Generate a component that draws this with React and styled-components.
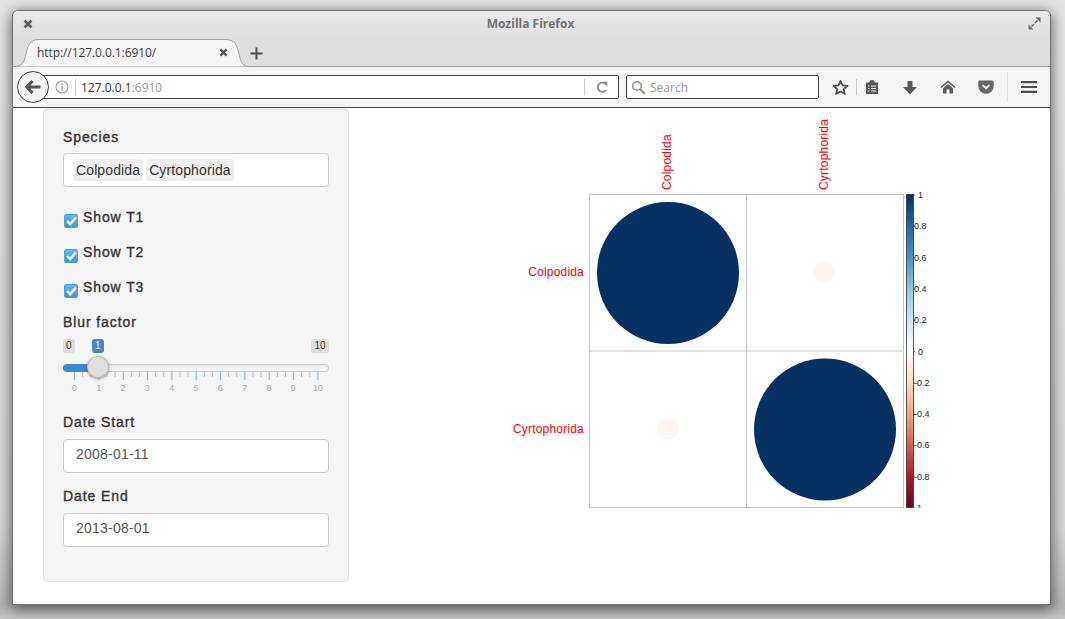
import styled, { createGlobalStyle } from "styled-components"

const Global = createGlobalStyle`
    html, body { margin: 0; padding: 0; }
    body {
        width: 1065px;
        height: 619px;
        overflow: hidden;
        background: linear-gradient(#e4e4e4, #d6d6d6 85%, #b4b4b4 98%, #c8c8c8);
        font-family: "Liberation Sans", Arial, sans-serif;
    }
`

const Desktop = styled.div`
    padding: 11px 15px 15px 13px;
    height: 619px;
    box-sizing: border-box;
`

const Win = styled.div`
    height: 593px;
    background: #fff;
    border-radius: 5px 5px 0 0;
    box-shadow: 0 0 0 1px #6f6f6f, 0 3px 14px 2px rgba(0,0,0,.55);
    display: flex;
    flex-direction: column;
    overflow: hidden;
`

const TitleBar = styled.div`
    height: 28px;
    flex: none;
    box-sizing: border-box;
    background: linear-gradient(#e8e8e8, #e0e0e0);
    display: flex;
    align-items: center;
    justify-content: space-between;
    padding: 0 9px 3px 10px;
    color: #6d6d6d;
`

const Title = styled.div`
    font-family: "Open Sans", sans-serif;
    font-size: 12px;
    font-weight: 700;
    color: #737373;
`

const TabStrip = styled.div`
    height: 28px;
    flex: none;
    box-sizing: border-box;
    background: #dedede;
    border-bottom: 1px solid #9b9b9b;
    display: flex;
    align-items: flex-end;
    padding-left: 12px;
`

const Tab = styled.div`
    width: 216px;
    height: 28px;
    margin-bottom: -1px;
    box-sizing: border-box;
    position: relative;
    display: flex;
    align-items: center;
    justify-content: space-between;
    padding: 0 13px 2px 12px;
    font-family: "Open Sans", sans-serif;
    font-size: 12px;
    letter-spacing: -.08px;
    color: #3a3a3a;
    & > span, & > svg:last-child { position: relative; }
`

const TabShape = styled.svg`
    position: absolute;
    top: 0;
    left: -12px;
`

const NewTab = styled.div`
    margin: 0 0 6px 9px;
    display: flex;
`

const Toolbar = styled.div`
    height: 41px;
    flex: none;
    box-sizing: border-box;
    background: #f5f5f5;
    border-bottom: 1px solid #444;
    display: flex;
    align-items: center;
    padding-left: 4px;
    position: relative;
`

const BackButton = styled.div`
    width: 32px;
    height: 32px;
    flex: none;
    box-sizing: border-box;
    border: 1px solid #444;
    border-radius: 50%;
    background: #f7f7f7;
    display: flex;
    align-items: center;
    justify-content: center;
    z-index: 1;
`

const UrlBar = styled.div`
    width: 581px;
    height: 24px;
    flex: none;
    margin-left: -11px;
    box-sizing: border-box;
    background: #fff;
    border: 1px solid #444;
    border-left: none;
    border-radius: 0 2px 2px 0;
    display: flex;
    align-items: center;
    padding-left: 17px;
    font-family: "Open Sans", sans-serif;
    font-size: 12px;
    color: #333;
`

const Sep = styled.span`
    width: 1px;
    height: ${p => p.$h || 16}px;
    background: ${p => p.$color || "#ccc"};
    flex: none;
    margin: ${p => p.$margin || "0 5px"};
`

const UrlText = styled.span`
    flex: 1;
    & em { font-style: normal; color: #9a9a9a; }
`

const SearchBar = styled.div`
    width: 193px;
    height: 24px;
    flex: none;
    margin-left: 7px;
    box-sizing: border-box;
    background: #fff;
    border: 1px solid #444;
    border-radius: 2px;
    display: flex;
    align-items: center;
    gap: 4px;
    padding-left: 4px;
    font-family: "Open Sans", sans-serif;
    font-size: 12px;
    color: #9a9a9a;
`

const ToolIcons = styled.div`
    display: flex;
    align-items: center;
    margin-left: 13px;
    color: #555;
`

const ToolIcon = styled.div`
    width: ${p => p.$w || 16}px;
    margin: ${p => p.$margin || 0};
    display: flex;
    justify-content: center;
`

const Content = styled.div`
    flex: 1;
    display: flex;
    min-height: 0;
    background: #fff;
`

const Panel = styled.div`
    width: 306px;
    height: 473px;
    flex: none;
    margin: 1px 0 0 30px;
    box-sizing: border-box;
    background: #f5f5f5;
    border: 1px solid #e3e3e3;
    border-radius: 4px;
    padding: 17px 19px 0;
    color: #333;
`

const Label = styled.div`
    font-size: 14px;
    line-height: 20px;
    letter-spacing: .9px;
    -webkit-text-stroke: .35px #333;
    color: #333;
    margin-top: ${p => p.$mt || 0}px;
    margin-bottom: ${p => p.$mb ?? 6}px;
`

const SelectBox = styled.div`
    height: 34px;
    box-sizing: border-box;
    background: #fff;
    border: 1px solid #ccc;
    border-radius: 4px;
    display: flex;
    align-items: center;
    gap: 3px;
    padding-left: 9px;
    margin-bottom: 21px;
`

const Chip = styled.span`
    background: #efefef;
    border-radius: 3px;
    padding: 0 3px;
    line-height: 22px;
    font-size: 14px;
    letter-spacing: .12px;
    color: #333;
`

const CheckRow = styled.div`
    display: flex;
    height: 20px;
    margin-bottom: 15px;
    padding-left: 1px;
`

const CheckBox = styled.span`
    width: 14px;
    height: 14px;
    flex: none;
    margin: 6px 5px 0 0;
    border-radius: 2px;
    background: linear-gradient(#5ebcf0, #3f94d6);
    border: 1px solid #4f9fd8;
    box-sizing: border-box;
    display: flex;
    align-items: center;
    justify-content: center;
`

const CheckLabel = styled.span`
    font-size: 14px;
    line-height: 20px;
    letter-spacing: .9px;
    -webkit-text-stroke: .35px #333;
    color: #333;
    margin-top: -1px;
`

const Slider = styled.div`
    position: relative;
    height: 60px;
    margin-bottom: 13px;
`

const Bubble = styled.span`
    position: absolute;
    top: 0;
    left: ${p => p.$left}px;
    height: 14px;
    padding: 0 ${p => p.$pad || 3}px;
    font-size: 10px;
    line-height: 14px;
    border-radius: 3px;
    background: ${p => p.$active ? "#428bca" : "#ddd"};
    color: ${p => p.$active ? "#fff" : "#333"};
`

const Track = styled.div`
    position: absolute;
    top: 25px;
    left: 0;
    right: 0;
    height: 8px;
    box-sizing: border-box;
    border: 1px solid #ccc;
    border-radius: 5px;
    background: linear-gradient(#e6e6e6, #fff);
`

const TrackFill = styled.div`
    position: absolute;
    top: -1px;
    left: -1px;
    width: 36px;
    height: 8px;
    background: #428bca;
    border-radius: 5px 0 0 5px;
`

const Handle = styled.div`
    position: absolute;
    top: 17px;
    left: 24px;
    width: 22px;
    height: 22px;
    box-sizing: border-box;
    border-radius: 50%;
    background: #dfdfdf;
    border: 1px solid #bdbdbd;
    box-shadow: 0 1px 3px rgba(0,0,0,.35);
`

const Scale = styled.svg`
    position: absolute;
    top: 33px;
    left: 0;
`

const DateInput = styled.div`
    height: 34px;
    box-sizing: border-box;
    background: #fff;
    border: 1px solid #ccc;
    border-radius: 4px;
    padding: 0 12px;
    font-size: 14px;
    letter-spacing: .22px;
    line-height: 29px;
    color: #555;
    margin-bottom: ${p => p.$mb ?? 13}px;
`

const ChartWrap = styled.div`
    margin-left: 159px;
    flex: none;
`

const X = ({ size = 9, color = "#5f5f5f" }) => (
    <svg width={size} height={size} viewBox="0 0 10 10">
        <path d="M1.5 1.5l7 7M8.5 1.5l-7 7" stroke={color} strokeWidth="2.6" />
    </svg>
)

const Back = () => (
    <svg width="16" height="14" viewBox="0 0 16 14">
        <path d="M7.5 1L2 7l5.5 6M3 7h12.5" fill="none" stroke="#555" strokeWidth="3.2" />
    </svg>
)

const Info = () => (
    <svg width="14" height="14" viewBox="0 0 14 14" style={{ flex: "none" }}>
        <circle cx="7" cy="7" r="6" fill="none" stroke="#999" strokeWidth="1.1" />
        <path d="M7 6v4.5M7 3.2v1.6" stroke="#999" strokeWidth="1.4" />
    </svg>
)

const Reload = () => (
    <svg width="12" height="12" viewBox="0 0 12 12" style={{ flex: "none" }}>
        <path d="M10 3.5A4.6 4.6 0 1 0 10 9" fill="none" stroke="#8a8a8a" strokeWidth="1.8" />
        <path d="M7 0.8h4.4v4.4z" fill="#8a8a8a" />
    </svg>
)

const Magnifier = () => (
    <svg width="15" height="15" viewBox="0 0 15 15" style={{ flex: "none" }}>
        <circle cx="6" cy="6" r="4.3" fill="none" stroke="#8e8e8e" strokeWidth="1.6" />
        <path d="M9.2 9.2l4.6 4.6" stroke="#8e8e8e" strokeWidth="2.2" />
    </svg>
)

const Star = () => (
    <svg width="17" height="17" viewBox="0 0 17 17">
        <path d="M8.5 1.8l2 4.6 5 .5-3.8 3.3 1.2 4.9-4.4-2.6-4.4 2.6 1.2-4.9L1.5 6.9l5-.5z" fill="none" stroke="#4d4d4d" strokeWidth="1.7" strokeLinejoin="round" />
    </svg>
)

const Clip = () => (
    <svg width="14" height="16" viewBox="0 0 14 16">
        <path d="M1 3.5h3.5V2.5a2.5 1.5 0 0 1 5 0v1H13V15H1z" fill="#555" />
        <path d="M3 7h1.5M3 9.5h1.5M3 12h1.5M6 7h5M6 9.5h5M6 12h5" stroke="#f5f5f5" strokeWidth="1.1" />
    </svg>
)

const Down = () => (
    <svg width="14" height="15" viewBox="0 0 14 15">
        <path d="M4.5 1h5v6H14l-7 7.5L0 7h4.5z" fill="#5a5a5a" />
    </svg>
)

const Home = () => (
    <svg width="16" height="14" viewBox="0 0 16 14">
        <path d="M8 0.5L0.5 7l1 1L8 2.6 14.5 8l1-1z" fill="#5a5a5a" />
        <path d="M8 4L3 8.2V13.5h3.5V9.5h3v4H13V8.2z" fill="#5a5a5a" />
    </svg>
)

const Pocket = () => (
    <svg width="16" height="14" viewBox="0 0 16 14">
        <path d="M1.5 0.5h13A1.2 1.2 0 0 1 15.7 1.7V6A7.7 7.7 0 0 1 .3 6V1.7A1.2 1.2 0 0 1 1.5 .5z" fill="#666" />
        <path d="M4.5 5l3.5 3.2L11.5 5" fill="none" stroke="#f5f5f5" strokeWidth="2" />
    </svg>
)

const Menu = () => (
    <svg width="16" height="12" viewBox="0 0 16 12">
        <path d="M0 1.2h16M0 6h16M0 10.8h16" stroke="#4d4d4d" strokeWidth="2.2" />
    </svg>
)

const Expand = () => (
    <svg width="13" height="13" viewBox="0 0 13 13">
        <path d="M7.5 0.5H12.5V5.5zM.5 7.5V12.5H5.5z" fill="#6d6d6d" />
        <path d="M9.5 3.5L7 6M3.5 9.5L6 7" stroke="#6d6d6d" strokeWidth="1.6" />
    </svg>
)

const Check = () => (
    <svg width="11" height="10" viewBox="0 0 11 10">
        <path d="M1.2 5.2l3 3 5.6-6.6" fill="none" stroke="#fff" strokeWidth="2.4" />
    </svg>
)

function SliderScale() {
    const ticks = []
    for (let i = 0; i <= 30; i++) {
        const x = 11.5 + i * (24.34 / 3)
        const major = i % 3 === 0
        ticks.push(<line key={i} x1={x} x2={x} y1="0" y2={major ? 8 : 5} stroke={major ? "#8db8dc" : "#c2c2c2"} />)
    }
    return (
        <Scale width="266" height="26">
            {ticks}
            {[0, 1, 2, 3, 4, 5, 6, 7, 8, 9, 10].map(n => (
                <text key={n} x={11.3 + n * 24.34} y="19" fontSize="9" textAnchor="middle" fill="#aaa" fontFamily="Liberation Sans">{n}</text>
            ))}
        </Scale>
    )
}

// rdbu stops of the corrplot colour legend
const stops = [
    [0, "#053061"], [.1, "#2166ac"], [.2, "#4393c3"], [.3, "#92c5de"], [.4, "#d1e5f0"],
    [.5, "#ffffff"], [.6, "#fddbc7"], [.7, "#f4a582"], [.8, "#d6604d"], [.9, "#b2182b"], [1, "#67001f"],
]

const legend = ["1", "0.8", "0.6", "0.4", "0.2", "0", "-0.2", "-0.4", "-0.6", "-0.8", "-1"]

function Corrplot() {
    // svg origin is page x 508, y 108
    const ox = 508, oy = 108
    const labelProps = { fill: "#ff0000", fontSize: 12, letterSpacing: .2, fontFamily: "Liberation Sans" }
    return (
        <svg width="460" height="420" viewBox={`${ox} ${oy} 460 420`}>
            <defs>
                <linearGradient id="rdbu" x1="0" y1="0" x2="0" y2="1">
                    {stops.map(([o, c]) => <stop key={o} offset={o} stopColor={c} />)}
                </linearGradient>
                <clipPath id="legendClip">
                    <rect x="900" y="185" width="50" height="323" />
                </clipPath>
            </defs>
            <rect x="589.5" y="194.5" width="314" height="313" fill="#fff" stroke="#c4c4c4" />
            <line x1="746.5" x2="746.5" y1="194.5" y2="507.5" stroke="#c4c4c4" />
            <line x1="589.5" x2="903.5" y1="351" y2="351" stroke="#c4c4c4" />
            <circle cx="668" cy="273" r="71" fill="#053061" />
            <circle cx="825" cy="429.5" r="71" fill="#053061" />
            <circle cx="824" cy="272" r="10.5" fill="#fdf6f2" />
            <circle cx="668" cy="429" r="10.5" fill="#fdf6f2" />
            <text x="584" y="276" textAnchor="end" {...labelProps}>Colpodida</text>
            <text x="584" y="433" textAnchor="end" {...labelProps}>Cyrtophorida</text>
            <text transform="translate(671 190) rotate(-90)" {...labelProps}>Colpodida</text>
            <text transform="translate(828 190) rotate(-90)" {...labelProps}>Cyrtophorida</text>
            <rect x="906.5" y="194.5" width="7" height="313" fill="url(#rdbu)" stroke="#333" strokeWidth=".8" />
            <g clipPath="url(#legendClip)">
                {legend.map((t, i) => {
                    const y = 195 + i * 31.3
                    return (
                        <g key={t}>
                            <line x1="913" x2="915" y1={y} y2={y} stroke="#333" strokeWidth=".7" />
                            <text x={t === "-1" ? 914 : t.length === 1 ? 918 : 914} y={y + 3} fontSize="9" fill="#222" fontFamily="Liberation Sans">{t}</text>
                        </g>
                    )
                })}
            </g>
        </svg>
    )
}

export default function App() {
    return (
        <>
            <Global />
            <Desktop>
                <Win>
                    <TitleBar>
                        <X size={10} />
                        <Title>Mozilla Firefox</Title>
                        <Expand />
                    </TitleBar>
                    <TabStrip>
                        <Tab>
                            <TabShape width="240" height="28" viewBox="0 0 240 28">
                                <path d="M0 27.5C9 27.5 11 24 13 15C15 6 17 .5 26 .5L212 .5C222 .5 224 6 226 15C228 24 230 27.5 236 27.5" fill="#f5f5f5" stroke="#a4a4a4" />
                            </TabShape>
                            <span>http://127.0.0.1:6910/</span>
                            <X size={9} color="#555" />
                        </Tab>
                        <NewTab>
                            <svg width="13" height="13" viewBox="0 0 13 13">
                                <path d="M6.5 0.5v12M0.5 6.5h12" stroke="#4d4d4d" strokeWidth="2" />
                            </svg>
                        </NewTab>
                    </TabStrip>
                    <Toolbar>
                        <BackButton><Back /></BackButton>
                        <UrlBar>
                            <Info />
                            <Sep $margin="0 5px 0 6px" />
                            <UrlText>127.0.0.1<em>:6910</em></UrlText>
                            <Sep $margin="0 11px 0 0" />
                            <Reload />
                            <Sep $margin="0 9px 0 0" $color="transparent" />
                        </UrlBar>
                        <SearchBar><Magnifier />Search</SearchBar>
                        <ToolIcons>
                            <ToolIcon $w={17}><Star /></ToolIcon>
                            <Sep $margin="0 7px" />
                            <ToolIcon><Clip /></ToolIcon>
                            <ToolIcon $margin="0 22px"><Down /></ToolIcon>
                            <ToolIcon><Home /></ToolIcon>
                            <ToolIcon $margin="0 13px 0 22px"><Pocket /></ToolIcon>
                            <Sep $h={30} $margin="0 13px 0 0" $color="#e2e2e2" />
                            <ToolIcon><Menu /></ToolIcon>
                        </ToolIcons>
                    </Toolbar>
                    <Content>
                        <Panel>
                            <Label>Species</Label>
                            <SelectBox>
                                <Chip>Colpodida</Chip>
                                <Chip>Cyrtophorida</Chip>
                            </SelectBox>
                            {["Show T1", "Show T2", "Show T3"].map(t => (
                                <CheckRow key={t}>
                                    <CheckBox><Check /></CheckBox>
                                    <CheckLabel>{t}</CheckLabel>
                                </CheckRow>
                            ))}
                            <Label $mt={-1} $mb={7}>Blur factor</Label>
                            <Slider>
                                <Bubble $left={0}>0</Bubble>
                                <Bubble $left={29} $active>1</Bubble>
                                <Bubble $left={248} $pad={3.5}>10</Bubble>
                                <Track><TrackFill /></Track>
                                <SliderScale />
                                <Handle />
                            </Slider>
                            <Label $mb={7}>Date Start</Label>
                            <DateInput>2008-01-11</DateInput>
                            <Label $mb={7}>Date End</Label>
                            <DateInput>2013-08-01</DateInput>
                        </Panel>
                        <ChartWrap><Corrplot /></ChartWrap>
                    </Content>
                </Win>
            </Desktop>
        </>
    )
}
